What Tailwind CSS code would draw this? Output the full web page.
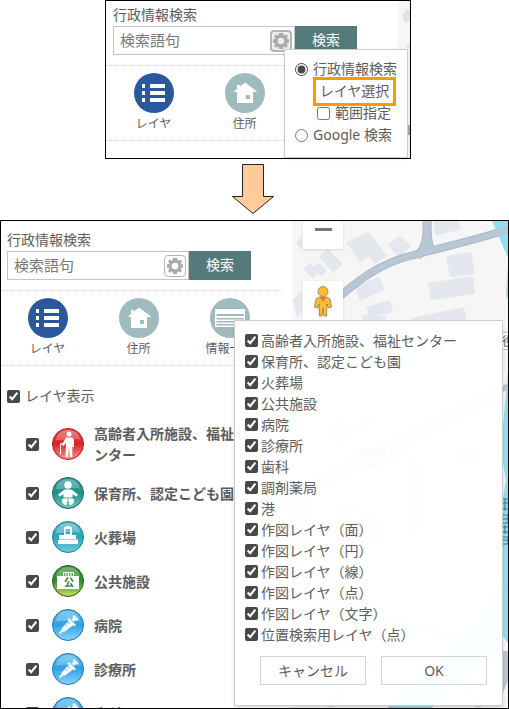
<!DOCTYPE html>
<html lang="ja">

<head>
  <meta charset="utf-8">
  <meta name="viewport" content="width=device-width, initial-scale=1">
  <script src="https://cdn.jsdelivr.net/npm/@tailwindcss/browser@4"></script>
  <title>行政情報検索</title>
</head>

<body class="bg-white font-['Noto_Sans','Noto_Sans_CJK_JP',sans-serif] text-sm text-[#5c5c5c]">

  <!-- shared icons -->
  <svg class="absolute size-0">
    <defs>
      <linearGradient id="gRed" x2="0" y2="1"><stop stop-color="#e2524f" /><stop offset=".5" stop-color="#d92325" /><stop offset="1" stop-color="#f39a96" /></linearGradient>
      <linearGradient id="gTeal" x2="0" y2="1"><stop stop-color="#3b9992" /><stop offset=".5" stop-color="#1d938b" /><stop offset="1" stop-color="#74c6bf" /></linearGradient>
      <linearGradient id="gCyan" x2="0" y2="1"><stop stop-color="#58b7c8" /><stop offset=".5" stop-color="#2ba3b9" /><stop offset="1" stop-color="#6fccdb" /></linearGradient>
      <linearGradient id="gGreen" x2="0" y2="1"><stop stop-color="#3f9a3a" /><stop offset=".5" stop-color="#2b8a2b" /><stop offset="1" stop-color="#c9e45c" /></linearGradient>
      <linearGradient id="gBlue" x2="0" y2="1"><stop stop-color="#5cb9ec" /><stop offset=".5" stop-color="#2ea3e6" /><stop offset="1" stop-color="#8ad3fb" /></linearGradient>
    </defs>
    <symbol id="gear" viewBox="0 0 16 16">
      <path fill="#aaa" fill-rule="evenodd" d="M6 0h4l.5 2 1 .5L13.500 1.500 15 3.500 13.700 5l.5 1 1.800.2v3.600l-1.800.3-.5 1 1.300 1.600-2 2-1.700-1.200-1 .5-.3 2H6l-.5-2-1-.5L3 14.700 1 12.700l1.300-1.600-.5-1L0 9.800V6.200L1.800 6l.5-1L1 3.500l1.800-2 1.700 1 1-.5zM8 4.700a3.300 3.300 0 1 0 0 6.600 3.300 3.300 0 0 0 0-6.600z" />
    </symbol>
    <symbol id="layers" viewBox="0 0 40 40">
      <circle cx="20" cy="20" r="20" fill="#2b579d" />
      <path fill="#fff" d="M8 11h3v4H8zM8 18h3v4H8zM8 25h3v4H8zM16 11h15v4H16zM16 18h15v4H16zM16 25h15v4H16z" />
    </symbol>
    <symbol id="house" viewBox="0 0 40 40">
      <circle cx="20" cy="20" r="20" fill="#9fbbbd" />
      <path fill="#fff" fill-rule="evenodd" d="M8.500 19 12 16v-4h3v1.500L20 9.500 32 18.500 31 19h-3v11H12V19zM21 22v4h4v-4z" />
    </symbol>
    <symbol id="table" viewBox="0 0 40 40">
      <circle cx="20" cy="20" r="20" fill="#9fbbbd" />
      <path fill="#fff" d="M5 11h30v18H5z" />
      <path fill="#9fbbbd" d="M6.500 16H34v2H6.500zM6.500 20H34v1.500H6.500zM6.500 23H34v1.500H6.500zM6.500 26H34v1.500H6.500z" />
    </symbol>
    <symbol id="gloss" viewBox="0 0 32 32">
      <path fill="#fff" fill-opacity=".25" d="M4 12C5 5 10 2 16 2s11 3 12 10c-7-3-15 1-24 0z" />
    </symbol>
    <symbol id="syringe" viewBox="0 0 32 32">
      <circle cx="16" cy="16" r="15.500" fill="url(#gBlue)" stroke="#1d78b5" />
      <use href="#gloss" />
      <path stroke="#f6fbff" stroke-width="1.800" d="M7.500 24.500 12 20" />
      <path fill="#f6fbff" d="m9.500 19.500 7.500-8 4.500 4.500-8.500 6.500-3 .5zM15.500 10.500l1.500-1.500 7 7-1.500 1.500zM19.500 10.500l2-2-1-1 1.500-1.500 4.500 4.500-1.500 1.500-1.200-1-2 2z" />
      <path stroke="#59b5e8" d="m13 15.500 2 2M15.500 13l2 2" />
    </symbol>
  </svg>

  <main class="flex h-screen flex-col">

    <section class="relative mr-[98px] ml-[105px] flex border border-black">
      <div class="w-[292px] shrink-0 pt-[3px] pb-[17px]">
        <form class="px-[7px]">
          <label for="q1" class="block pb-px leading-[21px]">行政情報検索</label>
          <div class="flex h-[29px]">
            <div class="flex w-[182px] items-center border border-[#c4c4c4] pr-[2px]">
              <input id="q1" type="text" placeholder="検索語句" class="min-w-0 flex-1 pl-[6px] text-[15px] outline-none placeholder:text-[#777]">
              <button type="button" aria-label="検索設定" class="flex size-[22px] items-center justify-center rounded-sm border-2 border-[#b5b5b5] bg-[#eee]"><svg class="size-4"><use href="#gear" /></svg></button>
            </div>
            <button type="button" class="w-[62px] bg-[#557a7c] pb-[2px] text-white">検索</button>
          </div>
        </form>
        <nav class="mt-[10px] mr-[10px] flex border-y border-dotted border-[#ccc] pt-[7px] pb-[5px] pl-[2px] text-xs leading-[22px]">
          <a href="#" class="flex w-[91px] flex-col items-center"><svg class="size-10"><use href="#layers" /></svg>レイヤ</a>
          <a href="#" class="flex w-[91px] flex-col items-center"><svg class="size-10"><use href="#house" /></svg>住所</a>
          <a href="#" class="flex w-[91px] flex-col items-center"><svg class="size-10"><use href="#table" /></svg>情報一覧</a>
        </nav>
      </div>
      <svg class="min-w-0 flex-1 bg-[#f6f6f7]" viewBox="0 0 12 157" preserveAspectRatio="xMinYMin slice">
        <path fill="#dfe2ec" d="M4 14 9 8l3 2v10l-5 2zM7 45l5-4v8z" />
        <path fill="#9aabc4" d="M10 124h2v10h-2z" />
      </svg>

      <!-- search settings -->
      <div class="absolute top-12 right-[2px] w-[124px] border border-[#ccc] bg-white/97 pt-2 pb-[11px] pl-[10px] shadow-sm">
        <label class="flex h-[22px] items-center gap-[5px] whitespace-nowrap"><input type="radio" name="mode" checked class="size-[13px] accent-[#484848]">行政情報検索</label>
        <div class="flex h-[22px] items-center pl-[18px]">
          <button type="button" class="h-[29px] w-[83px] shrink-0 border-3 border-[#f90] whitespace-nowrap">レイヤ選択</button>
        </div>
        <label class="flex h-[22px] items-center gap-[5px] pl-[22px] whitespace-nowrap"><input type="checkbox" class="size-[13px] accent-[#484848]">範囲指定</label>
        <label class="flex h-[22px] items-center gap-[5px] whitespace-nowrap"><input type="radio" name="mode" class="size-[13px] accent-[#484848]">Google 検索</label>
      </div>
    </section>

    <div class="flex h-[61px] shrink-0 items-center justify-center pr-[3px]">
      <svg class="h-[51px] w-[42px]" viewBox="0 0 42 51">
        <path fill="#ffcc99" stroke="#222" d="M10.500.5h21v32h10L21 49.500.5 32.500h10z" />
      </svg>
    </div>

    <section class="relative flex min-h-0 flex-1 overflow-hidden border border-black">
      <div class="w-[291px] shrink-0 pt-2">
        <form class="px-[6px]">
          <label for="q2" class="block pb-px leading-[21px]">行政情報検索</label>
          <div class="flex h-[29px]">
            <div class="flex w-[182px] items-center border border-[#c4c4c4] pr-[2px]">
              <input id="q2" type="text" placeholder="検索語句" class="min-w-0 flex-1 pl-[6px] text-[15px] outline-none placeholder:text-[#777]">
              <button type="button" aria-label="検索設定" class="flex size-[22px] items-center justify-center rounded-sm border border-[#b5b5b5]"><svg class="size-4"><use href="#gear" /></svg></button>
            </div>
            <button type="button" class="w-[62px] bg-[#557a7c] pb-[2px] text-white">検索</button>
          </div>
        </form>
        <nav class="mt-[10px] mr-[10px] flex border-y border-dotted border-[#ccc] pt-[7px] pb-[5px] pl-px text-xs leading-[22px]">
          <a href="#" class="flex w-[91px] flex-col items-center"><svg class="size-10"><use href="#layers" /></svg>レイヤ</a>
          <a href="#" class="flex w-[91px] flex-col items-center"><svg class="size-10"><use href="#house" /></svg>住所</a>
          <a href="#" class="flex w-[91px] flex-col items-center"><svg class="size-10"><use href="#table" /></svg>情報一覧</a>
        </nav>
        <label class="mt-[18px] flex h-6 items-center gap-[5px] pl-[6px]"><input type="checkbox" checked class="size-[13px] accent-[#484848]">レイヤ表示</label>
        <ul class="mt-[9px] pl-[25px] leading-[21px] font-bold">
          <li><label class="flex items-center py-[6px]"><input type="checkbox" checked class="size-[13px] shrink-0 accent-[#484848]">
            <svg class="mr-[10px] ml-[13px] size-8 shrink-0" viewBox="0 0 32 32">
              <circle cx="16" cy="16" r="15.500" fill="url(#gRed)" stroke="#b3161b" /><use href="#gloss" />
              <circle cx="17" cy="6" r="2.500" fill="#fff" />
              <path fill="#fff" d="M14 9.500h6l2 2V19h-1.500v-5l-.3 15h-2.400L17 20l-1 9h-2.500l.5-14-2.500 3-2-1z" />
              <path stroke="#fff" d="M8.500 26V15.500l2 .5" fill="none" />
            </svg>
            <span class="w-[160px]">高齢者入所施設、福祉センター</span></label></li>
          <li><label class="flex items-center py-[6px]"><input type="checkbox" checked class="size-[13px] shrink-0 accent-[#484848]">
            <svg class="mr-[10px] ml-[13px] size-8 shrink-0" viewBox="0 0 32 32">
              <circle cx="16" cy="16" r="15.500" fill="url(#gTeal)" stroke="#11675f" /><use href="#gloss" />
              <circle cx="16" cy="8" r="3.700" fill="#fff" />
              <path fill="#fff" d="M12.500 12.500h7l6.500 5-1.500 2-4-2v3h-9v-3l-4 2-1.500-2zM10 22l5.500-1v4l-1.500 0 1.500 1.500-2 2-3.500-3zM22 22l-5.500-1v4l1.500 0-1.500 1.500 2 2 3.500-3z" />
            </svg>
            <span class="w-[160px]">保育所、認定こども園</span></label></li>
          <li><label class="flex items-center py-[6px]"><input type="checkbox" checked class="size-[13px] shrink-0 accent-[#484848]">
            <svg class="mr-[10px] ml-[13px] size-8 shrink-0" viewBox="0 0 32 32">
              <circle cx="16" cy="16" r="15.500" fill="url(#gCyan)" stroke="#1b8398" /><use href="#gloss" />
              <path fill="#fff" fill-rule="evenodd" d="M12 6h2V5h4v1h2v8h4v4h1.500v1H26v4H6v-4h1v-5h5zM13.500 8v5h4.500V8zM7 18.500v.5h19v-.5z" />
            </svg>
            <span class="w-[160px]">火葬場</span></label></li>
          <li><label class="flex items-center py-[6px]"><input type="checkbox" checked class="size-[13px] shrink-0 accent-[#484848]">
            <svg class="mr-[10px] ml-[13px] size-8 shrink-0" viewBox="0 0 32 32">
              <circle cx="16" cy="16" r="15.500" fill="url(#gGreen)" stroke="#1d5d1c" /><use href="#gloss" />
              <path fill="#fff" fill-rule="evenodd" d="M11 7h11v4h5v13H5V11h6zM12 8v3h1.500V8zM14.500 8v3H16V8zM17 8v3h1.500V8zM19.500 8v3H21V8z" />
              <text x="17" y="21" text-anchor="middle" font-size="10" fill="#2b7a2b">公</text>
            </svg>
            <span class="w-[160px]">公共施設</span></label></li>
          <li><label class="flex items-center py-[6px]"><input type="checkbox" checked class="size-[13px] shrink-0 accent-[#484848]">
            <svg class="mr-[10px] ml-[13px] size-8 shrink-0"><use href="#syringe" /></svg>
            <span class="w-[160px]">病院</span></label></li>
          <li><label class="flex items-center py-[6px]"><input type="checkbox" checked class="size-[13px] shrink-0 accent-[#484848]">
            <svg class="mr-[10px] ml-[13px] size-8 shrink-0"><use href="#syringe" /></svg>
            <span class="w-[160px]">診療所</span></label></li>
          <li><label class="flex items-center py-[6px]"><input type="checkbox" checked class="size-[13px] shrink-0 accent-[#484848]">
            <svg class="mr-[10px] ml-[13px] size-8 shrink-0"><use href="#syringe" /></svg>
            <span class="w-[160px]">歯科</span></label></li>
        </ul>
      </div>

      <!-- map -->
      <svg class="h-full min-w-0 flex-1 bg-[#f6f6f6]" viewBox="292 221 216 487" preserveAspectRatio="xMinYMin slice">
        <path fill="#e5e7ef" d="m358 237 11-5 18 24-13 8zM346 242l14-6 10 20-10 6zM319 256l9-7 15 15-10 9zM303 269l7-6 4 3 5-3 8 7-6 6-5-2-2 5zM388 245l12-9 11 10-12 12zM433 221h25l4 8-26 7zM446 256l25-4 4 22-25 3zM428 283l45-7 2 18-44 6zM355 287l24-10 6 13-25 11zM366 307l24-7 3 12-24 5zM412 318l52-11 3 14H412zM362 320v-5l23 1v5zM293 300l9-10v22l-5 6zM296 243l6-7v14z" />
        <path fill="none" stroke="#a9b8c7" stroke-width="9" d="M427 221c1 18-2 29-10 35M427 221c0 20 2 28 6 30" />
        <path fill="none" stroke="#a9b8c7" stroke-width="8" d="M330 305c30-27 50-41 80-49s70-17 99-27" />
        <path fill="none" stroke="#b9c6d3" stroke-width="7" d="M427 221c1 18-2 29-10 35M427 221c0 20 2 28 6 30" />
        <path fill="#97dcee" d="M492 221h16v36l-4-8zM508 265l-2 30 2 5zM508 370c-5 60-9 80-2 110l-4 25v130l6 8z" />
        <path fill="none" stroke="#b9c6d3" stroke-width="6" d="M330 305c30-27 50-41 80-49s70-17 99-27M485 397l24-11" />
        <path fill="none" stroke="#dfe4ea" stroke-width="16" d="M310 485l185-92" />
        <path fill="#b9c6d3" d="M502 651h6v30l-6 14z" />
        <path fill="#e5e7ef" d="m325 430 17-14 13 14-16 22zM350 425l20-16 8 14-16 12zM455 452l20-10 6 18-18 8zM334 508l18-8 10 12-18 10zM293 498h18v62h-18z" />
        <path fill="none" stroke="#dfe4ea" stroke-width="8" d="M385 458c25-10 34 0 31 25s5 55-14 52M293 590l200 60M330 708c30-70 110-60 150 0" />
        <path fill="#97dcee" d="M388 708c20-30 90-60 114-128v60c-20 30-50 40-70 68z" />
        <path fill="#8fa9d4" d="M358 451q14-6 28 0 2 12-14 17-16-5-14-17z" />
        <text x="372" y="462" text-anchor="middle" font-size="9" font-weight="700" fill="#fff">384</text>
        <circle cx="369" cy="530" r="15" fill="#c5dba6" />
        <text x="369" y="536" text-anchor="middle" font-size="13" fill="#fff">公</text>
        <path fill="#fff" stroke="#bbb" d="M497.500 332.500h20v17h-20z" />
        <text x="502" y="346" font-size="12" fill="#555">役</text>
        <path fill="none" stroke="#16879d" d="M503 499h5M503 503h5M503 509h5M505 499v12M503 515h5v8h-5M503 519h5M503 527h5M505 525v9M503 532h5M503 537h5v7h-5M503 540h5" />
      </svg>

      <div class="absolute top-0 left-[302px] flex w-10 flex-col gap-8">
        <button type="button" aria-label="縮小" class="flex h-7 justify-center bg-white pt-[7px] shadow"><span class="h-[3px] w-[17px] bg-[#777]"></span></button>
        <button type="button" aria-label="ストリートビュー" class="flex h-10 justify-center bg-white pt-1 shadow">
          <svg class="h-8 w-[18px]" viewBox="0 0 18 32">
            <path fill="#fbbc2e" stroke="#8a7750" stroke-width=".8" d="M5 12h8l3 2 1.500 8-3 1-1.500-4-.5 12H10l-1-8-1 8H5.500L5 19l-1.500 4-3-1L2 14z" />
            <circle cx="9" cy="6.500" r="5" fill="#fbbc2e" stroke="#8a7750" stroke-width=".8" />
            <path fill="#e8792a" d="M5.500 12h7L9 17z" />
          </svg>
        </button>
      </div>

      <!-- layer selection dialog -->
      <form class="absolute top-[99px] right-[5px] w-[269px] border border-[#ccc] bg-white/96 pt-[9px] pb-5 pl-[10px] shadow-md">
        <ul>
          <li><label class="flex h-[21px] items-center gap-[3px]"><input type="checkbox" checked class="size-[13px] accent-[#484848]">高齢者入所施設、福祉センター</label></li>
          <li><label class="flex h-[21px] items-center gap-[3px]"><input type="checkbox" checked class="size-[13px] accent-[#484848]">保育所、認定こども園</label></li>
          <li><label class="flex h-[21px] items-center gap-[3px]"><input type="checkbox" checked class="size-[13px] accent-[#484848]">火葬場</label></li>
          <li><label class="flex h-[21px] items-center gap-[3px]"><input type="checkbox" checked class="size-[13px] accent-[#484848]">公共施設</label></li>
          <li><label class="flex h-[21px] items-center gap-[3px]"><input type="checkbox" checked class="size-[13px] accent-[#484848]">病院</label></li>
          <li><label class="flex h-[21px] items-center gap-[3px]"><input type="checkbox" checked class="size-[13px] accent-[#484848]">診療所</label></li>
          <li><label class="flex h-[21px] items-center gap-[3px]"><input type="checkbox" checked class="size-[13px] accent-[#484848]">歯科</label></li>
          <li><label class="flex h-[21px] items-center gap-[3px]"><input type="checkbox" checked class="size-[13px] accent-[#484848]">調剤薬局</label></li>
          <li><label class="flex h-[21px] items-center gap-[3px]"><input type="checkbox" checked class="size-[13px] accent-[#484848]">港</label></li>
          <li><label class="flex h-[21px] items-center gap-[3px]"><input type="checkbox" checked class="size-[13px] accent-[#484848]">作図レイヤ（面）</label></li>
          <li><label class="flex h-[21px] items-center gap-[3px]"><input type="checkbox" checked class="size-[13px] accent-[#484848]">作図レイヤ（円）</label></li>
          <li><label class="flex h-[21px] items-center gap-[3px]"><input type="checkbox" checked class="size-[13px] accent-[#484848]">作図レイヤ（線）</label></li>
          <li><label class="flex h-[21px] items-center gap-[3px]"><input type="checkbox" checked class="size-[13px] accent-[#484848]">作図レイヤ（点）</label></li>
          <li><label class="flex h-[21px] items-center gap-[3px]"><input type="checkbox" checked class="size-[13px] accent-[#484848]">作図レイヤ（文字）</label></li>
          <li><label class="flex h-[21px] items-center gap-[3px]"><input type="checkbox" checked class="size-[13px] accent-[#484848]">位置検索用レイヤ（点）</label></li>
        </ul>
        <div class="mt-[11px] flex gap-[15px] pr-[15px] pl-[15px]">
          <button type="button" class="h-[29px] flex-1 border border-[#d4d4d4]">キャンセル</button>
          <button type="button" class="h-[29px] flex-1 border border-[#d4d4d4]">OK</button>
        </div>
      </form>
    </section>

  </main>
</body>

</html>
